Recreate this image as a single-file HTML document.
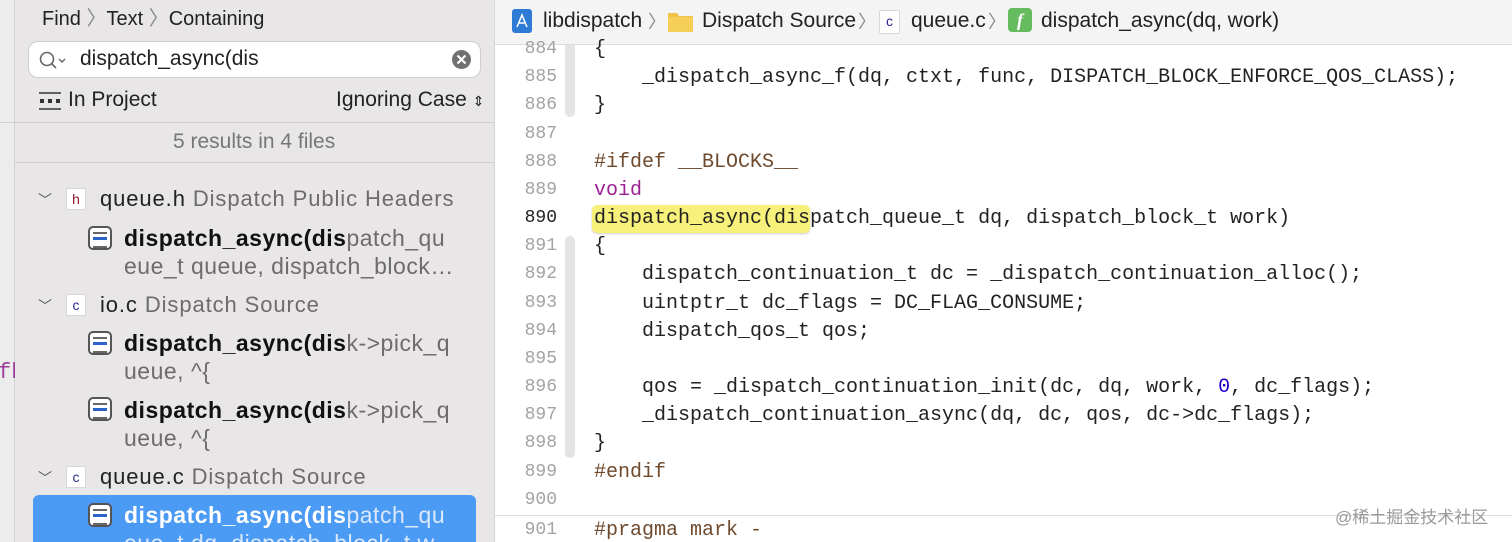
<!DOCTYPE html>
<html><head><meta charset="utf-8"><style>
*{margin:0;padding:0;box-sizing:border-box}
html,body{width:1512px;height:542px;overflow:hidden}
body{background:#fff;font-family:"Liberation Sans",sans-serif;position:relative}
.a{position:absolute;white-space:pre}
#strip{left:0;top:0;width:15px;height:542px;background:#ececec;border-right:1px solid #d4d2d2}
#side{left:15px;top:0;width:480px;height:542px;background:#e8e6e6;border-right:1px solid #d6d4d4}
.s{font-size:20px;color:#222;line-height:24px}
.r{font-size:22px;letter-spacing:0.9px}
.m{font-size:23px;letter-spacing:0.5px;line-height:28px}
.g{color:#6d6b6b}
.b{font-weight:bold;color:#111}
.fi{width:20px;height:22px;background:#fff;border:1px solid #d8d6d6;border-radius:2px;font-size:14px;text-align:center;line-height:20px}
.ri{width:24px;height:24px;border:2px solid #555;border-radius:5px;background:#fff}
.ri:before{content:"";position:absolute;left:3px;right:3px;top:4px;height:12px;border-top:2px solid #666;border-bottom:2px solid #666;}
.ri:after{content:"";position:absolute;left:3px;right:3px;top:9px;height:3px;background:#2a64c8}
.chev{font-size:14px;color:#555}
#edit{left:495px;top:0;width:1017px;height:542px;background:#fff}
#bc{left:495px;top:0;width:1017px;height:45px;background:#f5f4f4;border-bottom:1px solid #dddcdc}
.ln{font-family:"Liberation Mono",monospace;font-size:18px;color:#a3a3a3;width:60px;text-align:right;left:497px}
.cd{font-family:"Liberation Mono",monospace;font-size:20px;color:#222;left:594px}
.bs{font-size:21px;line-height:24px;color:#222;top:9px}
.sep{color:#888;font-size:18px}
</style></head><body>
<div class="a" id="strip"></div>
<div class="a" style="left:0;top:122px;width:15px;height:1px;background:#d0cece"></div>
<div class="a" style="left:-2px;top:360px;font-family:'Liberation Mono',monospace;font-size:22px;color:#9b3f9b">fb</div>
<div class="a" id="side"></div>
<div class="a s" style="left:42px;top:7px">Find <span style="color:#888">〉</span>Text <span style="color:#888">〉</span>Containing</div>
<div class="a" style="left:28px;top:41px;width:453px;height:37px;background:#fff;border:1px solid #cfcdcd;border-radius:10px"></div>
<svg class="a" style="left:38px;top:49px" width="32" height="22"><circle cx="9" cy="10" r="6.5" fill="none" stroke="#666" stroke-width="1.6"/><line x1="14" y1="15" x2="18" y2="19" stroke="#666" stroke-width="1.6"/><path d="M21 10l3 3 3-3" fill="none" stroke="#666" stroke-width="1.4"/></svg>
<div class="a s" style="left:80px;top:47px;font-size:21px">dispatch_async(dis</div>
<svg class="a" style="left:451px;top:49px" width="21" height="21"><circle cx="10.5" cy="10.5" r="9.5" fill="#707070"/><path d="M6.5 6.5l8 8M14.5 6.5l-8 8" stroke="#fff" stroke-width="2.2"/></svg>
<svg class="a" style="left:38px;top:91px" width="24" height="20"><line x1="1" y1="2" x2="23" y2="2" stroke="#333" stroke-width="1.5"/><rect x="2" y="8" width="4" height="4" fill="#333"/><rect x="10" y="8" width="4" height="4" fill="#333"/><rect x="18" y="8" width="4" height="4" fill="#333"/><line x1="1" y1="18" x2="23" y2="18" stroke="#333" stroke-width="1.5"/></svg>
<div class="a s" style="left:68px;top:88px;font-size:21px">In Project</div>
<div class="a s" style="left:336px;top:88px;font-size:21px">Ignoring Case <span style="font-size:14px">⇕</span></div>
<div class="a" style="left:15px;top:122px;width:479px;height:1px;background:#d0cece"></div>
<div class="a s" style="left:173px;top:130px;color:#777;font-size:21px">5 results in 4 files</div>
<div class="a" style="left:15px;top:162px;width:479px;height:1px;background:#d0cece"></div>

<div class="a chev" style="left:38px;top:190px">﹀</div>
<div class="a fi" style="left:66px;top:188px;color:#8b1a2a">h</div>
<div class="a s r" style="left:100px;top:187px">queue.h <span class="g">Dispatch Public Headers</span></div>
<div class="a ri" style="left:88px;top:226px"></div>
<div class="a s m" style="left:124px;top:224px"><span class="b">dispatch_async(dis</span><span class="g">patch_qu</span></div>
<div class="a s m g" style="left:124px;top:252px">eue_t queue, dispatch_block…</div>

<div class="a chev" style="left:38px;top:296px">﹀</div>
<div class="a fi" style="left:66px;top:294px;color:#2a2a8b">c</div>
<div class="a s r" style="left:100px;top:293px">io.c <span class="g">Dispatch Source</span></div>
<div class="a ri" style="left:88px;top:331px"></div>
<div class="a s m" style="left:124px;top:329px"><span class="b">dispatch_async(dis</span><span class="g">k-&gt;pick_q</span></div>
<div class="a s m g" style="left:124px;top:357px">ueue, ^{</div>
<div class="a ri" style="left:88px;top:397px"></div>
<div class="a s m" style="left:124px;top:396px"><span class="b">dispatch_async(dis</span><span class="g">k-&gt;pick_q</span></div>
<div class="a s m g" style="left:124px;top:424px">ueue, ^{</div>

<div class="a chev" style="left:38px;top:468px">﹀</div>
<div class="a fi" style="left:66px;top:466px;color:#2a2a8b">c</div>
<div class="a s r" style="left:100px;top:465px">queue.c <span class="g">Dispatch Source</span></div>
<div class="a" style="left:33px;top:495px;width:443px;height:60px;background:#4b9bf5;border-radius:6px"></div>
<div class="a ri" style="left:88px;top:503px"></div>
<div class="a s m" style="left:124px;top:501px;color:#fff"><b>dispatch_async(dis</b><span style="color:#dce9fb">patch_qu</span></div>
<div class="a s m" style="left:124px;top:529px;color:#dce9fb">eue_t dq, dispatch_block_t w</div>

<div class="a" id="edit"></div>
<div class="a" id="bc"></div>
<svg class="a" style="left:511px;top:8px" width="22" height="26"><rect x="1" y="1" width="20" height="24" rx="3" fill="#2e7bd6"/><path d="M6 19l5-12 5 12M7.5 15h7" stroke="#fff" stroke-width="1.5" fill="none"/></svg>
<div class="a bs" style="left:543px">libdispatch</div><div class="a bs sep" style="left:648px;top:10px">〉</div>
<svg class="a" style="left:667px;top:9px" width="27" height="24"><path d="M1 4h9l2 3h14v16H1z" fill="#f2c347"/><rect x="1" y="8" width="25" height="15" fill="#f6cf5a"/></svg>
<div class="a bs" style="left:702px">Dispatch Source</div><div class="a bs sep" style="left:858px;top:10px">〉</div>
<div class="a fi" style="left:879px;top:10px;color:#2a2a8b;width:21px;height:24px">c</div>
<div class="a bs" style="left:911px">queue.c</div><div class="a bs sep" style="left:988px;top:10px">〉</div>
<div class="a" style="left:1008px;top:8px;width:24px;height:24px;background:#66bb5e;border-radius:4px;color:#fff;font-style:italic;font-weight:bold;font-size:18px;text-align:center;line-height:24px;font-family:'Liberation Serif',serif">f</div>
<div class="a bs" style="left:1041px">dispatch_async(dq, work)</div>

<div class="a" style="left:565px;top:45px;width:10px;height:72px;background:#e4e4e4;border-radius:0 0 5px 5px"></div>
<div class="a" style="left:565px;top:236px;width:10px;height:222px;background:#e4e4e4;border-radius:5px"></div>
<div class="a" style="left:592px;top:205px;width:218px;height:28px;background:#f7f07a;border-radius:5px;box-shadow:0 1px 2px rgba(0,0,0,.2)"></div>
<div class="a" style="left:495px;top:515px;width:1017px;height:1px;background:#dcdcdc"></div>

<div class="a ln" style="top:39px">884</div><div class="a cd" style="top:38px">{</div>
<div class="a ln" style="top:67px">885</div><div class="a cd" style="top:66px">    _dispatch_async_f(dq, ctxt, func, DISPATCH_BLOCK_ENFORCE_QOS_CLASS);</div>
<div class="a ln" style="top:95px">886</div><div class="a cd" style="top:94px">}</div>
<div class="a ln" style="top:124px">887</div>
<div class="a ln" style="top:152px">888</div><div class="a cd" style="top:151px;color:#6e4a2e">#ifdef __BLOCKS__</div>
<div class="a ln" style="top:180px">889</div><div class="a cd" style="top:179px;color:#9b2393">void</div>
<div class="a ln" style="top:208px;color:#222">890</div><div class="a cd" style="top:207px">dispatch_async(dispatch_queue_t dq, dispatch_block_t work)</div>
<div class="a ln" style="top:236px">891</div><div class="a cd" style="top:235px">{</div>
<div class="a ln" style="top:264px">892</div><div class="a cd" style="top:263px">    dispatch_continuation_t dc = _dispatch_continuation_alloc();</div>
<div class="a ln" style="top:293px">893</div><div class="a cd" style="top:292px">    uintptr_t dc_flags = DC_FLAG_CONSUME;</div>
<div class="a ln" style="top:321px">894</div><div class="a cd" style="top:320px">    dispatch_qos_t qos;</div>
<div class="a ln" style="top:349px">895</div>
<div class="a ln" style="top:377px">896</div><div class="a cd" style="top:376px">    qos = _dispatch_continuation_init(dc, dq, work, <span style="color:#1c00cf">0</span>, dc_flags);</div>
<div class="a ln" style="top:405px">897</div><div class="a cd" style="top:404px">    _dispatch_continuation_async(dq, dc, qos, dc-&gt;dc_flags);</div>
<div class="a ln" style="top:433px">898</div><div class="a cd" style="top:432px">}</div>
<div class="a ln" style="top:462px">899</div><div class="a cd" style="top:461px;color:#6e4a2e">#endif</div>
<div class="a ln" style="top:490px">900</div>
<div class="a ln" style="top:520px">901</div><div class="a cd" style="top:519px;color:#6e4a2e">#pragma mark -</div>
<div class="a" style="left:1335px;top:503px;font-size:17px;color:#9a9a9a;font-family:'Liberation Sans','Noto Sans CJK SC',sans-serif">@稀土掘金技术社区</div>
</body></html>
